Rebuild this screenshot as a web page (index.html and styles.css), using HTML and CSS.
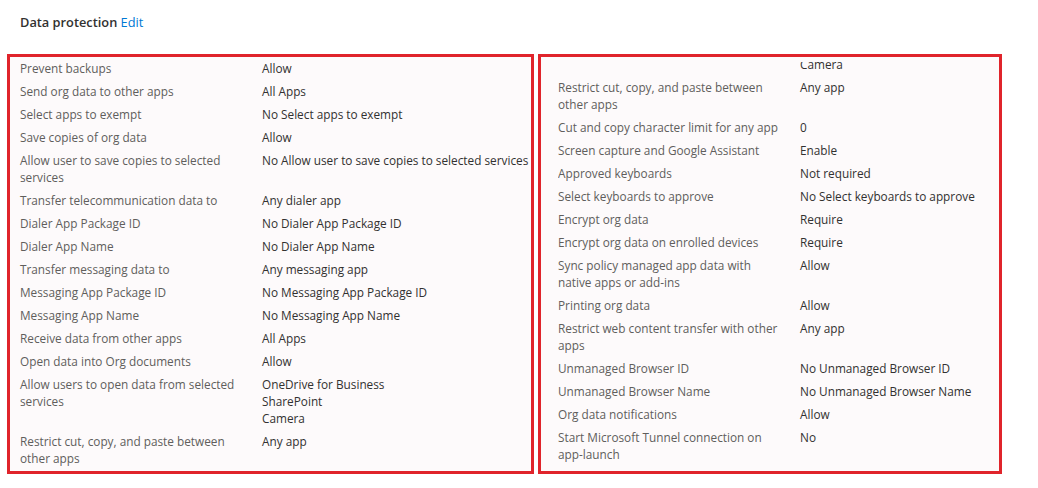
FILE: index.html
```html
<!DOCTYPE html>
<html lang="en">
<head>
<meta charset="utf-8">
<title>Data protection</title>
<link rel="stylesheet" href="styles.css">
</head>
<body>
<div class="page">
  <h2 class="section-title">Data protection <a class="edit-link" href="#">Edit</a></h2>
  <div class="panels">
    <div class="box box--left">
      <div class="list">
        <div class="row"><div class="label">Prevent backups</div><div class="value">Allow</div></div>
        <div class="row"><div class="label">Send org data to other apps</div><div class="value">All Apps</div></div>
        <div class="row"><div class="label">Select apps to exempt</div><div class="value">No Select apps to exempt</div></div>
        <div class="row"><div class="label">Save copies of org data</div><div class="value">Allow</div></div>
        <div class="row"><div class="label">Allow user to save copies to selected services</div><div class="value">No Allow user to save copies to selected services</div></div>
        <div class="row"><div class="label">Transfer telecommunication data to</div><div class="value">Any dialer app</div></div>
        <div class="row"><div class="label">Dialer App Package ID</div><div class="value">No Dialer App Package ID</div></div>
        <div class="row"><div class="label">Dialer App Name</div><div class="value">No Dialer App Name</div></div>
        <div class="row"><div class="label">Transfer messaging data to</div><div class="value">Any messaging app</div></div>
        <div class="row"><div class="label">Messaging App Package ID</div><div class="value">No Messaging App Package ID</div></div>
        <div class="row"><div class="label">Messaging App Name</div><div class="value">No Messaging App Name</div></div>
        <div class="row"><div class="label">Receive data from other apps</div><div class="value">All Apps</div></div>
        <div class="row"><div class="label">Open data into Org documents</div><div class="value">Allow</div></div>
        <div class="row"><div class="label">Allow users to open data from selected services</div><div class="value">OneDrive for Business<br>SharePoint<br>Camera</div></div>
        <div class="row"><div class="label">Restrict cut, copy, and paste between other apps</div><div class="value">Any app</div></div>
      </div>
    </div>
    <div class="box box--right">
      <div class="viewport">
        <div class="list list--scrolled">
          <div class="row"><div class="label">Allow users to open data from selected services</div><div class="value">OneDrive for Business<br>SharePoint<br>Camera</div></div>
          <div class="row"><div class="label">Restrict cut, copy, and paste between other apps</div><div class="value">Any app</div></div>
          <div class="row"><div class="label">Cut and copy character limit for any app</div><div class="value">0</div></div>
          <div class="row"><div class="label">Screen capture and Google Assistant</div><div class="value">Enable</div></div>
          <div class="row"><div class="label">Approved keyboards</div><div class="value">Not required</div></div>
          <div class="row"><div class="label">Select keyboards to approve</div><div class="value">No Select keyboards to approve</div></div>
          <div class="row"><div class="label">Encrypt org data</div><div class="value">Require</div></div>
          <div class="row"><div class="label">Encrypt org data on enrolled devices</div><div class="value">Require</div></div>
          <div class="row"><div class="label">Sync policy managed app data with native apps or add-ins</div><div class="value">Allow</div></div>
          <div class="row"><div class="label">Printing org data</div><div class="value">Allow</div></div>
          <div class="row"><div class="label">Restrict web content transfer with other apps</div><div class="value">Any app</div></div>
          <div class="row"><div class="label">Unmanaged Browser ID</div><div class="value">No Unmanaged Browser ID</div></div>
          <div class="row"><div class="label">Unmanaged Browser Name</div><div class="value">No Unmanaged Browser Name</div></div>
          <div class="row"><div class="label">Org data notifications</div><div class="value">Allow</div></div>
          <div class="row"><div class="label">Start Microsoft Tunnel connection on app-launch</div><div class="value">No</div></div>
        </div>
      </div>
    </div>
  </div>
</div>
</body>
</html>
```
FILE: styles.css
```css
* { box-sizing: border-box; }
html, body { margin: 0; padding: 0; background: #ffffff; }
body {
  font-family: "Open Sans", "Noto Sans", "Liberation Sans", sans-serif;
  font-size: 11.8px;
  color: #323130;
}
.page { padding: 13px 0 0 7px; }
.section-title {
  margin: 0 0 0 13px;
  font-size: 12.8px;
  font-weight: 600;
  line-height: 18px;
  color: #323130;
}
.edit-link {
  font-weight: 400;
  color: #0078d4;
  text-decoration: none;
}
.panels {
  display: flex;
  gap: 4px;
  margin-top: 23px;
}
.box {
  height: 420px;
  border: 3px solid #e0242b;
  background: #fdfafb;
  overflow: hidden;
}
.box--left { width: 527px; padding: 0 0 0 10px; }
.box--right { width: 464px; padding: 5px 0 0 17px; }
.viewport { height: 100%; overflow: hidden; }
.list { display: flex; flex-direction: column; }
.list--scrolled { margin-top: -43px; }
.row {
  display: grid;
  grid-template-columns: 226px auto;
  column-gap: 16px;
  padding: 3px 0;
  line-height: 17px;
}
.label { color: #605e5c; }
.value { color: #323130; white-space: nowrap; }
```
